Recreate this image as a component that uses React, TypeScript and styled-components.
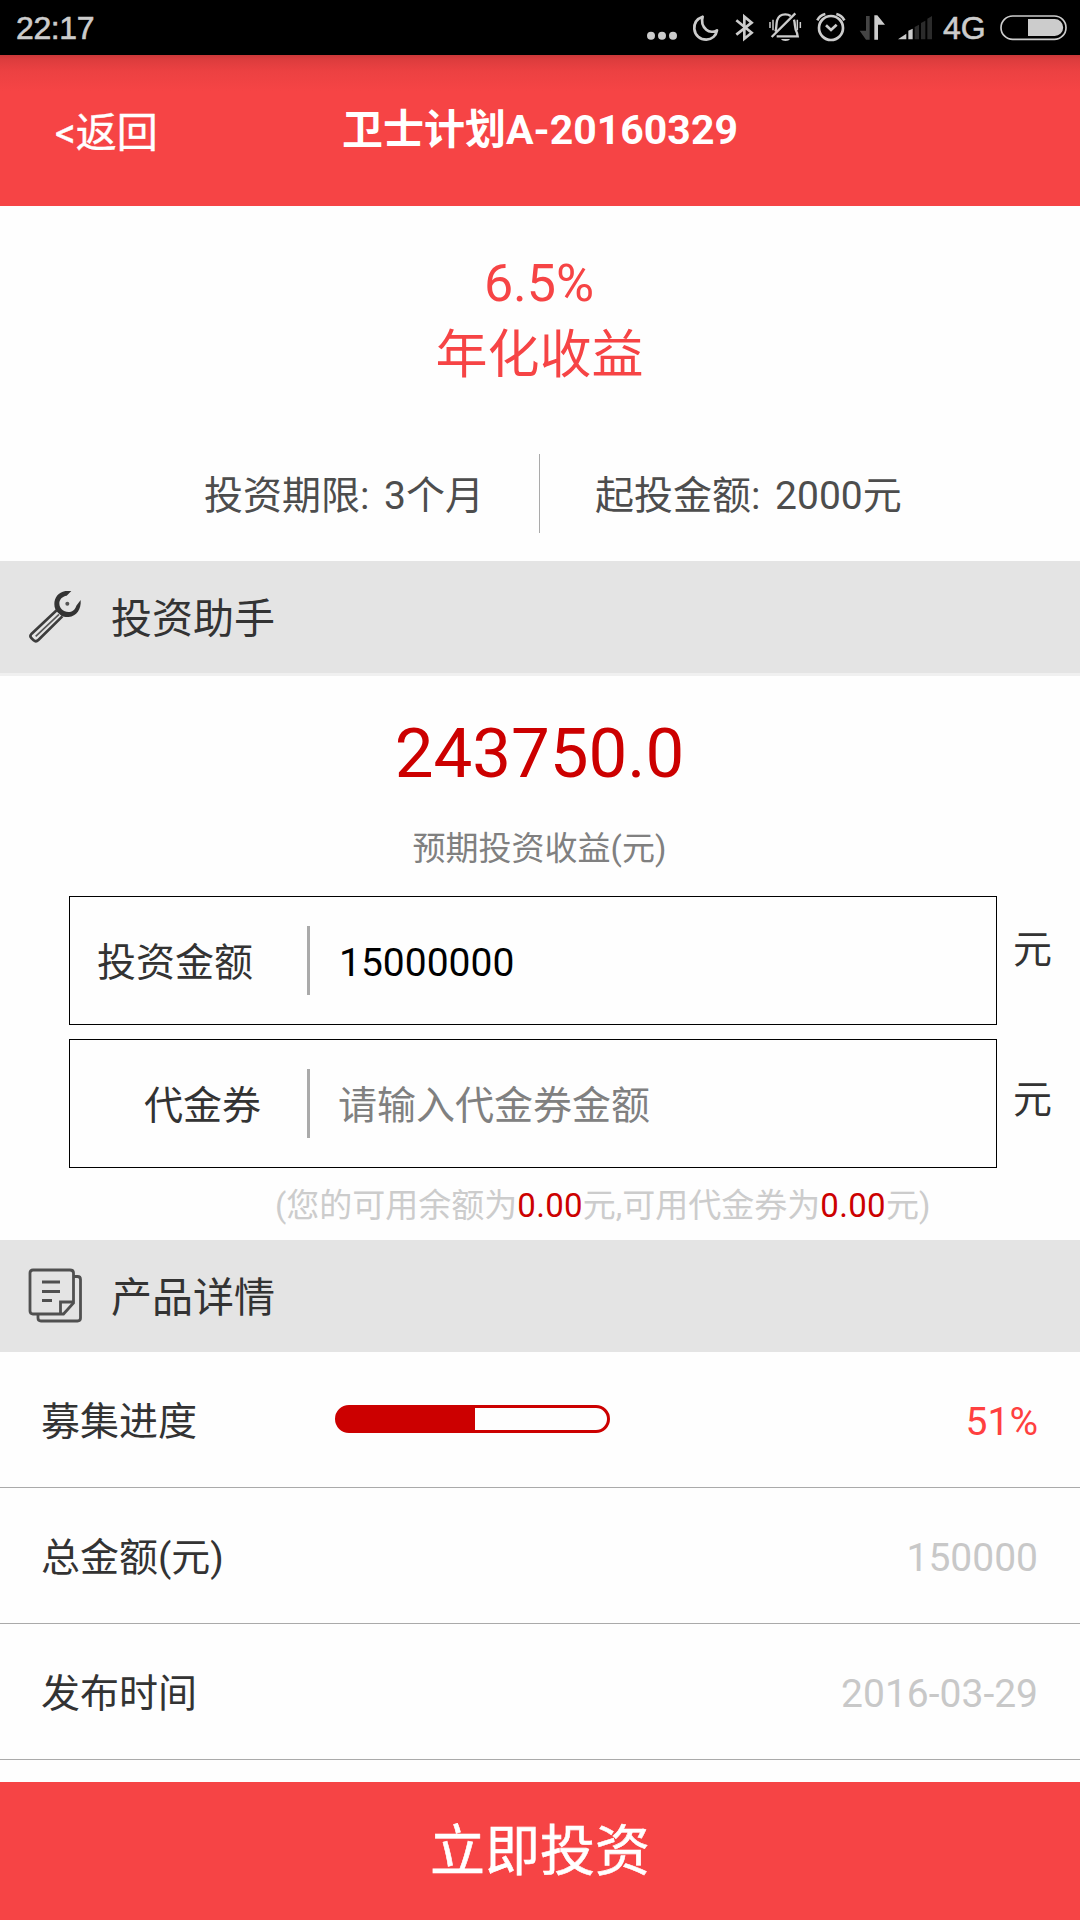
import React from 'react';
import styled, { createGlobalStyle } from 'styled-components';

const RED = '#f64445';
const DEEP_RED = '#cc0000';
const INK = '#333333';
const STATUS = '#cccccc';

const GlobalStyle = createGlobalStyle`
  *, *::before, *::after { box-sizing: border-box; }
  body {
    margin: 0;
    background: #fefefe;
    font-family: Roboto, "Noto Sans CJK SC", sans-serif;
    color: ${INK};
  }
`;

const Screen = styled.div`
  width: 1080px;
  height: 1920px;
  display: flex;
  flex-direction: column;
  overflow: hidden;
  background: #fefefe;
`;

const StatusBar = styled.header`
  height: 55px;
  flex: none;
  display: flex;
  align-items: center;
  justify-content: space-between;
  padding: 0 13px 0 16px;
  background: #000;
  color: ${STATUS};
  font: 32px/55px "Liberation Sans", sans-serif;
  -webkit-text-stroke: 0.6px ${STATUS};
`;

const Clock = styled.span`
  padding-top: 2px;
  letter-spacing: -0.4px;
`;

const StatusIcons = styled.div`
  display: flex;
  align-items: center;
`;

const StatusGlyph = styled.svg<{ $gap?: number }>`
  display: block;
  height: 55px;
  margin-left: ${(p) => p.$gap ?? 0}px;
`;

const Network = styled.span`
  width: 43px;
  margin-left: 10px;
  padding-top: 2px;
  white-space: nowrap;
`;

const NavBar = styled.nav`
  height: 151px;
  flex: none;
  display: grid;
  grid-template-columns: 270px 540px 270px;
  padding-top: 45px;
  background: linear-gradient(#ca3839 0, #dc3c3d 4px, #ec4142 16px, ${RED} 36px);
  color: #fff;
  font-size: 41px;
  line-height: 60px;
`;

const Back = styled.a`
  padding: 3px 0 0 55px;
  -webkit-text-stroke: 0.4px #fff;
`;

const Title = styled.h1`
  margin: 0;
  font-size: 41px;
  font-weight: 700;
  text-align: center;
  white-space: nowrap;
`;

const Summary = styled.section`
  height: 355px;
  flex: none;
  padding-top: 42px;
`;

const Rate = styled.p<{ $shift?: number }>`
  margin: 0;
  padding-right: ${(p) => p.$shift ?? 0}px;
  color: ${RED};
  font-size: 52px;
  line-height: 72px;
  text-align: center;
`;

const Terms = styled.div`
  height: 79px;
  margin-top: 62px;
  display: grid;
  grid-template-columns: 539px 1px 540px;
  font-size: 39px;
  line-height: 74px;
  word-spacing: 5px;
  color: #4d4d4d;
`;

const Term = styled.span<{ $indent: number }>`
  padding: 5px 0 0 ${(p) => p.$indent}px;
  white-space: nowrap;
`;

const TermDivider = styled.i`
  background: #aaaaaa;
`;

const SectionHeader = styled.div<{ $edge?: boolean }>`
  height: ${(p) => (p.$edge ? 115 : 112)}px;
  flex: none;
  display: flex;
  align-items: center;
  padding-left: 28px;
  background: #e4e4e4;
  border-bottom: ${(p) => (p.$edge ? '3px solid #f0f0f0' : '0')};
`;

const SectionIcon = styled.svg`
  flex: none;
  width: 56px;
  height: 56px;
`;

const SectionTitle = styled.h2`
  margin: 0 0 0 27px;
  padding-top: 3px;
  font-size: 41px;
  font-weight: 400;
  line-height: 60px;
`;

const Helper = styled.section`
  height: 564px;
  flex: none;
  padding-top: 38px;
`;

const Earnings = styled.p`
  margin: 0;
  padding-right: 1px;
  color: ${DEEP_RED};
  font-size: 69px;
  line-height: 80px;
  text-align: center;
`;

const Caption = styled.p`
  margin: 30px 0 0;
  padding-right: 1px;
  color: #808080;
  font-size: 33px;
  line-height: 50px;
  text-align: center;
`;

const FieldRow = styled.div<{ $top: number }>`
  display: flex;
  height: 129px;
  margin: ${(p) => p.$top}px 0 0 69px;
`;

const Field = styled.div`
  width: 928px;
  display: flex;
  align-items: center;
  border: 1px solid #000;
  font-size: 39px;
  line-height: 60px;
`;

const FieldLabel = styled.label<{ $indent: number }>`
  width: 237px;
  padding: 5px 0 0 ${(p) => p.$indent}px;
`;

const FieldDivider = styled.i`
  width: 3px;
  height: 69px;
  background: #aaaaaa;
`;

const FieldValue = styled.span<{ $hint?: boolean }>`
  padding: 5px 0 0 ${(p) => (p.$hint ? 28 : 29)}px;
  color: ${(p) => (p.$hint ? '#808080' : '#000')};
`;

const Unit = styled.span<{ $top: number }>`
  padding: ${(p) => p.$top}px 0 0 16px;
  font-size: 39px;
  line-height: 50px;
`;

const Balance = styled.p`
  margin: 13px 0 0;
  padding-left: 275px;
  color: #cccccc;
  font-size: 33px;
  line-height: 50px;
  white-space: nowrap;

  b {
    color: ${DEEP_RED};
    font-weight: 400;
    letter-spacing: 0.3px;
  }
`;

const DetailRow = styled.div`
  height: 136px;
  flex: none;
  display: grid;
  grid-template-columns: 275px 1fr;
  align-items: center;
  padding: 0 42px 0 41px;
  border-bottom: 1px solid #aaaaaa;
  font-size: 39px;
  line-height: 60px;
`;

const ProgressRow = styled(DetailRow)`
  grid-template-columns: 294px 275px 1fr;
`;

const DetailLabel = styled.span`
  padding-top: 5px;
  white-space: nowrap;
`;

const DetailValue = styled.span<{ $accent?: boolean }>`
  padding-top: 4px;
  text-align: right;
  color: ${(p) => (p.$accent ? '#ff4040' : '#c8c8c8')};
`;

const Track = styled.div`
  height: 28px;
  margin-bottom: 1px;
  border: 3px solid ${DEEP_RED};
  border-radius: 14px;
  background: linear-gradient(${DEEP_RED}, ${DEEP_RED}) 0 0 / 14px 100% no-repeat;
  overflow: hidden;
`;

const Fill = styled.div`
  height: 100%;
  background: ${DEEP_RED};
`;

const Invest = styled.button`
  height: 138px;
  flex: none;
  margin: 22px 0 0;
  padding: 0;
  border: 0;
  background: ${RED};
  color: #fff;
  font: 55px/138px Roboto, "Noto Sans CJK SC", sans-serif;
  -webkit-text-stroke: 0.6px #fff;
`;

const MoreIcon = () => (
  <StatusGlyph width="32" viewBox="48 0 96 165" fill={STATUS}>
    <circle cx="63" cy="107" r="12" />
    <circle cx="96" cy="107" r="12" />
    <circle cx="129" cy="107" r="12" />
  </StatusGlyph>
);

const MoonIcon = () => (
  <StatusGlyph $gap={14} width="27" viewBox="186 0 81 165" fill="none" stroke={STATUS} strokeWidth="8" strokeLinejoin="round">
    <path d="M218 50C198 57 192 73 193 87C195 106 210 119 229 119C246 119 259 106 261 91C252 97 238 97 229 89C217 79 214 64 218 50Z" />
  </StatusGlyph>
);

const BluetoothIcon = () => (
  <StatusGlyph $gap={16} width="19" viewBox="315 0 57 165" fill="none" stroke={STATUS} strokeWidth="8">
    <path d="M319 61L365 98L343 116V50L365 68L319 104" />
  </StatusGlyph>
);

const MutedBellIcon = () => (
  <StatusGlyph $gap={14} width="34" viewBox="414 0 102 165" fill="none" stroke={STATUS} strokeWidth="7">
    <path d="M436 95C440 88 438 75 441 62C445 48 455 43 466 43C472 43 478 45 482 48M492 59C496 72 493 86 501 99L503 109H440M425 111L496 40" />
    <path d="M420 66V84M429 59V91M502 59V91M511 66V84" strokeWidth="4.500" />
    <path d="M453 117H480C477 125 456 125 453 117Z" fill={STATUS} stroke="none" />
  </StatusGlyph>
);

const AlarmIcon = () => (
  <StatusGlyph $gap={13} width="31" viewBox="555 0 93 165" fill="none" stroke={STATUS} strokeWidth="8">
    <circle cx="603" cy="84" r="36" />
    <path d="M588 76L603 90L620 74" />
    <path d="M562 61Q569 46 586 42M643 61Q636 46 619 42" />
  </StatusGlyph>
);

const TrafficIcon = () => (
  <StatusGlyph $gap={13} width="27" viewBox="687 0 81 165">
    <path d="M719 48V119H708L689 92H708V48Z" fill="#444" />
    <path d="M733 119V46H742L765 74H744V119Z" fill={STATUS} />
  </StatusGlyph>
);

const SignalIcon = () => (
  <StatusGlyph $gap={12} width="35" viewBox="804 0 105 165">
    <path d="M804 118L829 101V118Z" fill={STATUS} />
    <path d="M835 118V92L848 86V118Z" fill={STATUS} />
    <path d="M854 118V81L867 74V118ZM873 118V69L886 62V118ZM892 118V56L906 48V118Z" fill="#2b2b2b" />
  </StatusGlyph>
);

const BatteryIcon = () => (
  <StatusGlyph $gap={14} width="67" viewBox="1110 0 201 165">
    <rect x="1113" y="48" width="195" height="70" rx="35" fill="none" stroke={STATUS} strokeWidth="5" />
    <path d="M1194 57H1274A25.500 25.500 0 0 1 1274 108H1194Z" fill={STATUS} />
  </StatusGlyph>
);

const WrenchIcon = () => (
  <SectionIcon viewBox="84 117 168 168">
    <path
      d="M214 123H196C175 127 163 143 163 162C163 174 167 182 174 188L184 197C191 201 200 202 206 201C230 199 244 178 242 150L229 167C225 180 216 186 205 186C190 186 178 176 178 160C178 148 187 139 200 137Z"
      fill={INK}
    />
    <circle cx="202" cy="161" r="6" fill="#555" />
    <path
      d="M170 181L95 251Q88 258 94 264L101 271Q108 277 115 270L187 199"
      fill="none"
      stroke="#3c3c3c"
      strokeWidth="8"
    />
    <path d="M177 193L107 259" fill="none" stroke="#555" strokeWidth="5" />
  </SectionIcon>
);

const DocumentIcon = () => (
  <SectionIcon viewBox="0 0 56 56" fill="none" stroke="#505050" strokeWidth="2.800">
    <path d="M5 2H42Q45.500 2 45.500 5V35L35.500 46H5Q2 46 2 43V5Q2 2 5 2Z" />
    <path d="M32.500 46V34H45.500" />
    <path d="M14 14H32M14 23.500H32M14 32.500H24" />
    <path d="M46 8.500H49.500Q52.500 8.500 52.500 11.500V50Q52.500 53 49.500 53H13Q10 53 10 50V46" />
  </SectionIcon>
);

const progress = 51;

export default function App() {
  return (
    <>
      <GlobalStyle />
      <Screen>
        <StatusBar>
          <Clock>22:17</Clock>
          <StatusIcons>
            <MoreIcon />
            <MoonIcon />
            <BluetoothIcon />
            <MutedBellIcon />
            <AlarmIcon />
            <TrafficIcon />
            <SignalIcon />
            <Network>4G</Network>
            <BatteryIcon />
          </StatusIcons>
        </StatusBar>

        <NavBar>
          <Back>&lt;返回</Back>
          <Title>卫士计划A-20160329</Title>
        </NavBar>

        <Summary>
          <Rate $shift={2}>6.5%</Rate>
          <Rate $shift={1}>年化收益</Rate>
          <Terms>
            <Term $indent={204}>投资期限: 3个月</Term>
            <TermDivider />
            <Term $indent={55}>起投金额: 2000元</Term>
          </Terms>
        </Summary>

        <SectionHeader $edge>
          <WrenchIcon />
          <SectionTitle>投资助手</SectionTitle>
        </SectionHeader>

        <Helper>
          <Earnings>243750.0</Earnings>
          <Caption>预期投资收益(元)</Caption>
          <FieldRow $top={22}>
            <Field>
              <FieldLabel $indent={27}>投资金额</FieldLabel>
              <FieldDivider />
              <FieldValue>15000000</FieldValue>
            </Field>
            <Unit $top={29}>元</Unit>
          </FieldRow>
          <FieldRow $top={14}>
            <Field>
              <FieldLabel $indent={74}>代金券</FieldLabel>
              <FieldDivider />
              <FieldValue $hint>请输入代金券金额</FieldValue>
            </Field>
            <Unit $top={36}>元</Unit>
          </FieldRow>
          <Balance>
            (您的可用余额为<b>0.00</b>元,可用代金券为<b>0.00</b>元)
          </Balance>
        </Helper>

        <SectionHeader>
          <DocumentIcon />
          <SectionTitle>产品详情</SectionTitle>
        </SectionHeader>

        <ProgressRow>
          <DetailLabel>募集进度</DetailLabel>
          <Track>
            <Fill style={{ width: `${progress}%` }} />
          </Track>
          <DetailValue $accent>{progress}%</DetailValue>
        </ProgressRow>
        <DetailRow>
          <DetailLabel>总金额(元)</DetailLabel>
          <DetailValue>150000</DetailValue>
        </DetailRow>
        <DetailRow>
          <DetailLabel>发布时间</DetailLabel>
          <DetailValue>2016-03-29</DetailValue>
        </DetailRow>

        <Invest>立即投资</Invest>
      </Screen>
    </>
  );
}
